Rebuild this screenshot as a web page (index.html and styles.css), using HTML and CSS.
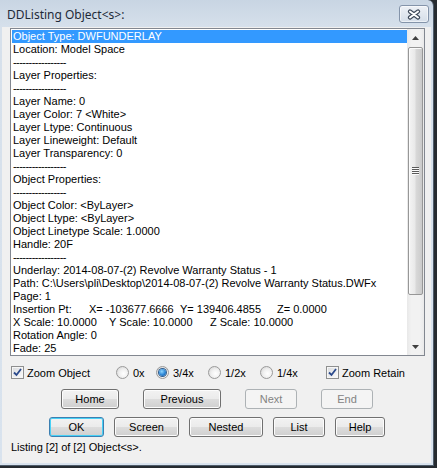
FILE: index.html
```html
<!DOCTYPE html>
<html>
<head>
<meta charset="utf-8">
<title>DDListing Object&lt;s&gt;</title>
<link rel="stylesheet" href="styles.css">
</head>
<body>
<div class="window">
  <div class="titlebar">
    <span class="title">DDListing Object&lt;s&gt;:</span>
    <div class="close">
      <svg width="14" height="11" viewBox="0 0 14 11"><path d="M3 2.5L11 8.5M11 2.5L3 8.5" stroke="#3d4858" stroke-width="4.2" stroke-linecap="round"/><path d="M3 2.5L11 8.5M11 2.5L3 8.5" stroke="#ffffff" stroke-width="2" stroke-linecap="round"/></svg>
    </div>
  </div>
  <div class="client">
    <div class="listbox">
      <div class="items">
        <div class="row sel">Object Type: DWFUNDERLAY</div>
        <div class="row">Location: Model Space</div>
        <div class="row sep">-----------------</div>
        <div class="row">Layer Properties:</div>
        <div class="row sep">-----------------</div>
        <div class="row">Layer Name: 0</div>
        <div class="row">Layer Color: 7 &lt;White&gt;</div>
        <div class="row">Layer Ltype: Continuous</div>
        <div class="row">Layer Lineweight: Default</div>
        <div class="row">Layer Transparency: 0</div>
        <div class="row sep">-----------------</div>
        <div class="row">Object Properties:</div>
        <div class="row sep">-----------------</div>
        <div class="row">Object Color: &lt;ByLayer&gt;</div>
        <div class="row">Object Ltype: &lt;ByLayer&gt;</div>
        <div class="row">Object Linetype Scale: 1.0000</div>
        <div class="row">Handle: 20F</div>
        <div class="row sep">-----------------</div>
        <div class="row">Underlay: 2014-08-07-(2) Revolve Warranty Status - 1</div>
        <div class="row">Path: C:\Users\pli\Desktop\2014-08-07-(2) Revolve Warranty Status.DWFx</div>
        <div class="row">Page: 1</div>
        <div class="row"><span class="cell ins1">Insertion Pt:</span><span class="cell ins2">X= -103677.6666</span><span class="cell ins3">Y= 139406.4855</span><span class="cell">Z= 0.0000</span></div>
        <div class="row"><span class="cell sc1">X Scale: 10.0000</span><span class="cell sc2">Y Scale: 10.0000</span><span class="cell">Z Scale: 10.0000</span></div>
        <div class="row">Rotation Angle: 0</div>
        <div class="row">Fade: 25</div>
      </div>
      <div class="vscroll">
        <div class="arrow"><svg width="7" height="4" viewBox="0 0 7 4"><path d="M3.5 0L7 4H0Z" fill="#404040"/></svg></div>
        <div class="track">
          <div class="thumb">
            <svg width="7" height="8" viewBox="0 0 7 8"><g fill="#5a5a5a"><rect y="0" width="7" height="1"/><rect y="2" width="7" height="1"/><rect y="4" width="7" height="1"/><rect y="6" width="7" height="1"/></g><g fill="#fafafa"><rect y="1" width="7" height="1"/><rect y="3" width="7" height="1"/><rect y="5" width="7" height="1"/><rect y="7" width="7" height="1"/></g></svg>
          </div>
        </div>
        <div class="arrow"><svg width="7" height="4" viewBox="0 0 7 4"><path d="M0 0H7L3.5 4Z" fill="#404040"/></svg></div>
      </div>
    </div>

    <div class="options">
      <label class="opt check"><span class="box"><svg width="11" height="11" viewBox="0 0 11 11"><path d="M2 5.5L4.5 8L9 2" fill="none" stroke="#2b4a8c" stroke-width="1.8"/></svg></span><span>Zoom Object</span></label>
      <label class="opt radio"><span class="circle"></span><span>0x</span></label>
      <label class="opt radio"><span class="circle on"><span class="dot"></span></span><span>3/4x</span></label>
      <label class="opt radio"><span class="circle"></span><span>1/2x</span></label>
      <label class="opt radio"><span class="circle"></span><span>1/4x</span></label>
      <label class="opt check"><span class="box"><svg width="11" height="11" viewBox="0 0 11 11"><path d="M2 5.5L4.5 8L9 2" fill="none" stroke="#2b4a8c" stroke-width="1.8"/></svg></span><span>Zoom Retain</span></label>
    </div>

    <div class="btnrow row1">
      <div class="btn w-home">Home</div>
      <div class="btn w-prev">Previous</div>
      <div class="btn disabled w-next">Next</div>
      <div class="btn disabled w-end">End</div>
    </div>
    <div class="btnrow row2">
      <div class="btn default w-ok">OK</div>
      <div class="btn w-screen">Screen</div>
      <div class="btn w-nested">Nested</div>
      <div class="btn w-list">List</div>
      <div class="btn w-help">Help</div>
    </div>
    <div class="status">Listing [2] of [2] Object&lt;s&gt;.</div>
  </div>
</div>
</body>
</html>
```

FILE: styles.css
```css
* { box-sizing: border-box; }
html, body { margin: 0; padding: 0; }
body {
  background: #262b30;
  width: 437px;
  height: 468px;
  overflow: hidden;
  font-family: "Liberation Sans", Arial, sans-serif;
  font-size: 11px;
  color: #000;
}
.window {
  width: 434px;
  height: 466px;
  display: flex;
  flex-direction: column;
  background: linear-gradient(#c8d5e3 0, #d6e0eb 27px, #d9e3ee 100%);
  border-right: 1px solid #4f5d6c;
  border-bottom: 1px solid #4f5d6c;
  border-top-right-radius: 6px;
}
.titlebar {
  height: 27px;
  flex: none;
  display: flex;
  align-items: flex-start;
  justify-content: space-between;
}
.title {
  font-family: "Noto Sans", "Open Sans", sans-serif;
  font-size: 12px;
  line-height: 16px;
  padding: 7px 0 0 7px;
  color: #1e2a38;
}
.close {
  width: 30px;
  height: 18px;
  margin: 5px 4px 0 0;
  border: 1px solid #8494aa;
  border-radius: 3px;
  background: linear-gradient(#edf1f6, #d5dee9);
  box-shadow: inset 0 0 0 1px rgba(255,255,255,0.55);
  display: flex;
  align-items: center;
  justify-content: center;
}
.client {
  flex: 1;
  margin: 0 2px 2px 2px;
  background: #f0f0f0;
  display: flex;
  flex-direction: column;
}
.listbox {
  flex: none;
  margin: 1px 0 0 8px;
  width: 415px;
  height: 328px;
  border: 1px solid #828790;
  background: #fff;
  display: flex;
}
.items {
  flex: 1;
  padding: 1px 0 0 1px;
  overflow: hidden;
}
.row {
  height: 13px;
  line-height: 13px;
  padding-left: 1px;
  white-space: nowrap;
}
.row.sel { background: #3399ff; color: #fff; }
.row.sep { letter-spacing: -0.55px; }
.cell { display: inline-block; }
.ins1 { width: 76px; }
.ins2 { width: 91px; }
.ins3 { width: 97px; }
.sc1 { width: 96px; }
.sc2 { width: 101px; }

.vscroll {
  width: 17px;
  flex: none;
  display: flex;
  flex-direction: column;
  background: linear-gradient(to right, #e8e8e8, #f2f2f2 25%, #f2f2f2 75%, #eaeaea);
}
.arrow {
  height: 17px;
  flex: none;
  display: flex;
  align-items: center;
  justify-content: center;
}
.track {
  flex: 1;
  padding: 1px 1px 0 1px;
}
.thumb {
  height: 248px;
  border: 1px solid #979797;
  border-radius: 2px;
  background: linear-gradient(to right, #f4f4f4 0, #e9e9e9 45%, #d8d8d8 55%, #cbcbcb 100%);
  box-shadow: inset 1px 1px 0 #fbfbfb;
  display: flex;
  align-items: center;
  justify-content: center;
}

.options {
  flex: none;
  margin-top: 9px;
  height: 15px;
  padding-left: 9px;
  display: grid;
  grid-template-columns: 105px 40px 52px 52px 66px auto;
  align-items: center;
}
.opt {
  display: flex;
  align-items: center;
  white-space: nowrap;
}
.check { gap: 3px; }
.radio { gap: 4px; }
.box {
  width: 13px;
  height: 13px;
  border: 1px solid #8e8f8f;
  background: linear-gradient(135deg, #d9dbde, #fbfbfb);
  box-shadow: inset 0 0 0 1px #f6f6f6;
  display: flex;
  align-items: center;
  justify-content: center;
}
.circle {
  width: 13px;
  height: 13px;
  border-radius: 50%;
  border: 1px solid #9a9a9a;
  background: radial-gradient(circle at 60% 60%, #ffffff 0, #f0f0f0 45%, #cfcfcf 100%);
  display: flex;
  align-items: center;
  justify-content: center;
}
.dot {
  width: 7px;
  height: 7px;
  border-radius: 50%;
  background: radial-gradient(circle at 40% 35%, #8fd6ff 0, #2c86d6 55%, #0d4d93 100%);
  box-shadow: 0 0 0 1px #305c8c;
}

.btnrow { flex: none; display: flex; }
.row1 { margin-top: 9px; padding-left: 59px; gap: 24px; }
.row2 { margin-top: 8px; padding-left: 47px; gap: 10px; }
.btn {
  height: 20px;
  border: 1px solid #707070;
  border-radius: 3px;
  background: linear-gradient(#f2f2f2 0, #ebebeb 50%, #dddddd 50%, #cfcfcf 100%);
  box-shadow: inset 0 0 0 1px #fcfcfc;
  display: flex;
  align-items: center;
  justify-content: center;
  line-height: 13px;
}
.btn.disabled {
  border-color: #adb2b5;
  background: #f4f4f4;
  box-shadow: none;
  color: #838383;
}
.btn.default {
  border-color: #3c7fb1;
  box-shadow: inset 0 0 0 1px #48d1f6;
}
.w-home { width: 58px; }
.w-prev { width: 78px; }
.w-next { width: 52px; }
.w-end { width: 52px; }
.w-ok { width: 55px; }
.w-screen { width: 65px; }
.w-nested { width: 74px; }
.w-list { width: 52px; }
.w-help { width: 50px; }

.status {
  flex: none;
  margin-top: 4px;
  padding-left: 9px;
  line-height: 13px;
}
```
